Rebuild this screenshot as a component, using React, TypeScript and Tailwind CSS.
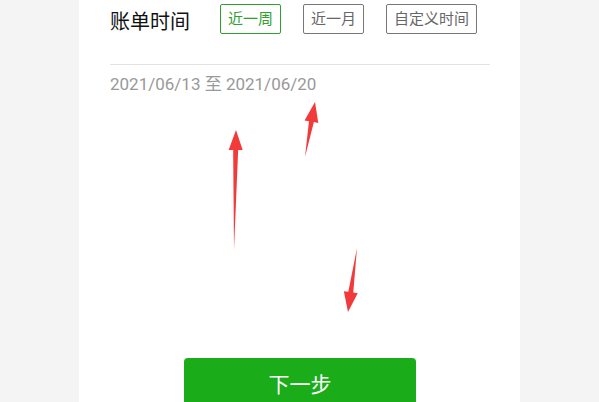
import React from 'react';

const ranges = ['近一周', '近一月', '自定义时间'];

const Arrow: React.FC<{ x1: number; y1: number; x2: number; y2: number }> = ({ x1, y1, x2, y2 }) => {
  // tail (x1,y1) -> tip (x2,y2), thin shaft that widens near the head
  const dx = x2 - x1;
  const dy = y2 - y1;
  const len = Math.sqrt(dx * dx + dy * dy);
  const ux = dx / len;
  const uy = dy / len;
  const px = -uy;
  const py = ux;
  const headLen = 20;
  const bx = x2 - ux * headLen;
  const by = y2 - uy * headLen;
  const pts = [
    [x1, y1],
    [bx + px * 2.5, by + py * 2.5],
    [bx + px * 7, by + py * 7],
    [x2, y2],
    [bx - px * 7, by - py * 7],
    [bx - px * 2.5, by - py * 2.5],
  ]
    .map((p) => p.join(','))
    .join(' ');
  return <polygon points={pts} fill="#f23a3a" />;
};

export default function App() {
  return (
    <div
      className="relative w-[599px] h-[402px] overflow-hidden bg-[#f4f4f4]"
      style={{ fontFamily: 'Roboto, "Noto Sans CJK SC", sans-serif' }}
    >
      <div className="ml-[79px] w-[441px] h-full bg-white pl-[31px] pr-[30px] flex flex-col">
        <div className="flex items-center h-[36px] mt-[1px]">
          <span className="text-[20px] text-[#111] leading-none w-[110px] mt-[5px]">账单时间</span>
          <div className="flex gap-[22px]">
            {ranges.map((r, i) => (
              <div
                key={r}
                className={`h-[30px] px-[7px] flex items-center rounded-[2px] border text-[15px] leading-none ${
                  i === 0 ? 'border-[#2ea12e] text-[#2ea12e]' : 'border-[#777] text-[#666]'
                }`}
              >
                {r}
              </div>
            ))}
          </div>
        </div>
        <div className="mt-[27px] h-px bg-[#e2e2e2]" />
        <div className="mt-[8px] text-[17px] text-[#999] leading-[22px]">2021/06/13 至 2021/06/20</div>
        <div className="flex-1" />
        <div className="flex justify-center">
          <button className="w-[232px] h-[56px] -mb-[12px] rounded-[4px] bg-[#1aad19] text-white text-[21px] leading-none pb-[2px]">
            下一步
          </button>
        </div>
      </div>
      <svg className="absolute inset-0 pointer-events-none" width="599" height="402">
        <Arrow x1={234} y1={250} x2={236} y2={130} />
        <Arrow x1={305} y1={157} x2={315} y2={102} />
        <Arrow x1={357} y1={248} x2={348} y2={312} />
      </svg>
    </div>
  );
}
